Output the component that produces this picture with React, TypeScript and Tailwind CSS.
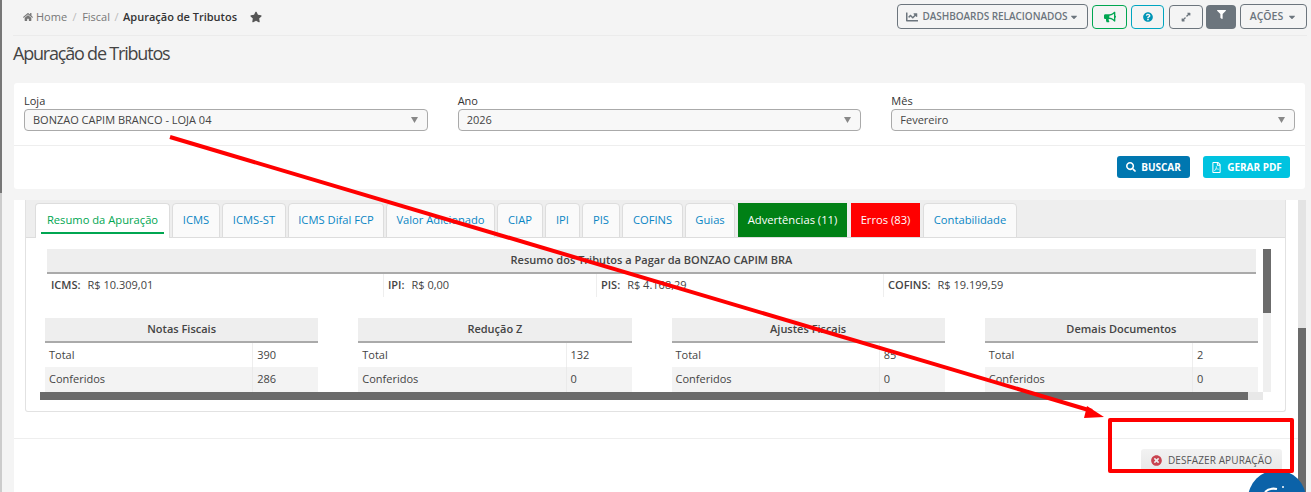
import {
  FaBullhorn,
  FaCaretDown,
  FaChartLine,
  FaExpandAlt,
  FaFilter,
  FaHome,
  FaQuestionCircle,
  FaRegFilePdf,
  FaSearch,
  FaStar,
  FaTimesCircle,
} from 'react-icons/fa'

const tabs = [
  { label: 'ICMS', w: 'w-[48px]' },
  { label: 'ICMS-ST', w: 'w-[64px]' },
  { label: 'ICMS Difal FCP', w: 'w-[96px]' },
  { label: 'Valor Adicionado', w: 'w-[109px]' },
  { label: 'CIAP', w: 'w-[46px]' },
  { label: 'IPI', w: 'w-[35px]' },
  { label: 'PIS', w: 'w-[38px]' },
  { label: 'COFINS', w: 'w-[61px]' },
  { label: 'Guias', w: 'w-[50px]' },
]

const totals = [
  { label: 'ICMS:', value: 'R$ 10.309,01', w: 'w-[337px]' },
  { label: 'IPI:', value: 'R$ 0,00', w: 'w-[213px]' },
  { label: 'PIS:', value: 'R$ 4.168,29', w: 'w-[287px]' },
  { label: 'COFINS:', value: 'R$ 19.199,59', w: 'flex-1' },
]

const docs = [
  { title: 'Notas Fiscais', total: '390', checked: '286' },
  { title: 'Redução Z', total: '132', checked: '0' },
  { title: 'Ajustes Fiscais', total: '85', checked: '0' },
  { title: 'Demais Documentos', total: '2', checked: '0' },
]

function SelectBox({ label, value }: { label: string; value: string }) {
  return (
    <div className="min-w-0">
      <div className="h-[16px] text-[11px] leading-[16px] text-[#333]">{label}</div>
      <div className="flex h-[22px] items-center justify-between rounded-[4px] border border-[#aaa] bg-[#f8f8f8] pl-[8px] pr-[8px] text-[11px] text-[#444]">
        <span>{value}</span>
        <svg width="7" height="6" viewBox="0 0 7 6" className="mr-px">
          <polygon points="0,0 7,0 3.5,6" fill="#888" />
        </svg>
      </div>
    </div>
  )
}

function DocTable({ title, total, checked }: { title: string; total: string; checked: string }) {
  return (
    <div className="text-[11px] text-[#444]">
      <div className="flex h-[25px] items-center justify-center border-b-2 border-[#aaa] bg-[#eee] font-semibold text-[#444]">
        {title}
      </div>
      <div className="flex h-[24px] items-center">
        <div className="flex h-full flex-1 items-center border-r border-[#eee] pl-[4px]">Total</div>
        <div className="w-[65px] pl-[4px]">{total}</div>
      </div>
      <div className="flex h-[25px] items-center bg-[#f3f3f3]">
        <div className="flex h-full flex-1 items-center border-r border-[#eaeaea] pl-[4px]">Conferidos</div>
        <div className="w-[65px] pl-[4px]">{checked}</div>
      </div>
    </div>
  )
}

export default function App() {
  return (
    <div className="relative flex h-[492px] w-[1311px] overflow-hidden bg-[#f4f4f4] font-['Open_Sans',sans-serif]">
      <div className="flex w-[2px] shrink-0 flex-col">
        <div className="h-[193px] bg-[#777]" />
        <div className="flex-1 bg-[#ccc]" />
      </div>

      <div className="ml-[12px] flex w-[1292px] shrink-0 flex-col">
        <div className="-mx-px flex h-[36px] shrink-0 items-start justify-between border-b border-[#ebebeb]">
          <div className="flex items-center pl-[10px] pt-[9px] text-[11px] leading-[16px] text-[#777]">
            <FaHome className="mr-[3px] h-[10px] w-[10px] text-[#777]" />
            <span>Home</span>
            <span className="mx-[5.5px] text-[#bbb]">/</span>
            <span>Fiscal</span>
            <span className="mx-[4.5px] text-[#bbb]">/</span>
            <span className="font-semibold text-[#333]">Apuração de Tributos</span>
            <FaStar className="ml-[13px] h-[12px] w-[12px] text-[#555]" />
          </div>
          <div className="flex items-start pt-[4px] text-[#6c757d]">
            <button className="flex h-[25px] w-[191px] items-center justify-center rounded-[4px] border border-[#6c757d] text-[10px] font-semibold tracking-[-0.05px]">
              <FaChartLine className="mr-[4px] h-[12px] w-[12px]" />
              DASHBOARDS RELACIONADOS
              <FaCaretDown className="ml-[1px] h-[10px] w-[10px]" />
            </button>
            <button className="ml-[4px] mt-px flex h-[24px] w-[35px] items-center justify-center rounded-[4px] border border-[#00a651] text-[#00a651]">
              <FaBullhorn className="h-[12px] w-[12px]" />
            </button>
            <button className="ml-[4px] mt-px flex h-[24px] w-[33px] items-center justify-center rounded-[4px] border border-[#00a5c0] text-[#0095b6]">
              <FaQuestionCircle className="h-[10px] w-[10px]" />
            </button>
            <button className="ml-[5px] mt-px flex h-[24px] w-[34px] items-center justify-center rounded-[4px] border border-[#6c757d]">
              <FaExpandAlt className="h-[10px] w-[10px]" />
            </button>
            <button className="ml-[3px] mt-px flex h-[24px] w-[30px] justify-center rounded-[4px] bg-[#6c757d] pt-[5px] text-white">
              <FaFilter className="h-[9px] w-[9px]" />
            </button>
            <button className="ml-[4px] flex h-[25px] w-[67px] items-center justify-center rounded-[4px] border border-[#6c757d] text-[10.5px] font-semibold">
              AÇÕES
              <FaCaretDown className="ml-[4px] h-[10px] w-[10px]" />
            </button>
          </div>
        </div>

        <div className="-ml-px flex h-[47px] shrink-0 items-start pt-[6px] text-[18px] leading-[22px] tracking-[-1.2px] text-[#444]">
          Apuração de Tributos
        </div>

        <div className="flex h-[106px] w-[1291px] shrink-0 flex-col rounded-[3px] bg-white">
          <div className="grid h-[63px] shrink-0 grid-cols-3 gap-x-[30px] border-b border-[#eee] px-[10px] pt-[10px]">
            <SelectBox label="Loja" value="BONZAO CAPIM BRANCO - LOJA 04" />
            <SelectBox label="Ano" value="2026" />
            <SelectBox label="Mês" value="Fevereiro" />
          </div>
          <div className="flex justify-end gap-[13px] pr-[15px] pt-[10px] text-[10px] font-bold text-white">
            <button className="flex h-[22px] w-[73px] items-center justify-center rounded-[3px] bg-[#0077b0]">
              <FaSearch className="mr-[5px] h-[10px] w-[10px]" />
              BUSCAR
            </button>
            <button className="flex h-[22px] w-[87px] items-center justify-center rounded-[3px] bg-[#00c3e0]">
              <FaRegFilePdf className="mr-[5px] h-[11px] w-[11px]" />
              GERAR PDF
            </button>
          </div>
        </div>

        <div className="mt-[11px] flex min-h-0 flex-1">
          <div className="min-w-0 flex-1 bg-white">
            <div className="ml-[11px] h-[212px] w-[1261px] rounded-b-[3px] border border-t-0 border-[#e2e2e2]">
              <div className="flex h-[38px] items-end border-b border-[#ddd] bg-[#eee] pl-[9px] text-[11.2px]">
                <div className="mb-[-1px] flex h-[35px] w-[135px] items-start justify-center rounded-t-[4px] border border-b-0 border-[#ddd] bg-white px-[5px] pt-[7px]">
                  <span className="block w-full border-b-2 border-[#00a651] pb-[3px] text-center leading-[18px] text-[#00a651]">
                    Resumo da Apuração
                  </span>
                </div>
                {tabs.map((t) => (
                  <div
                    key={t.label}
                    className={`mb-[-1px] ml-[2px] flex h-[35px] items-center justify-center rounded-t-[4px] border border-[#ddd] bg-[#fafafa] text-[#0a86c4] ${t.w}`}
                  >
                    {t.label}
                  </div>
                ))}
                <div className="ml-[3px] flex h-[34px] w-[109px] items-center justify-center bg-[#008015] text-white">
                  Advertências (11)
                </div>
                <div className="ml-[4px] flex h-[34px] w-[69px] items-center justify-center bg-[#ff0000] text-white">
                  Erros (83)
                </div>
                <div className="mb-[-1px] ml-[3px] flex h-[35px] w-[94px] items-center justify-center rounded-t-[4px] border border-[#ddd] bg-[#fafafa] text-[#0a86c4]">
                  Contabilidade
                </div>
              </div>

              <div className="ml-[14px] mt-[11px] flex w-[1231px]">
                <div className="h-[143px] w-[1223px] overflow-hidden">
                  <div className="h-[143px] px-[7px]">
                    <div className="flex h-[25px] items-center justify-center border-b-2 border-[#aaa] bg-[#eee] text-[11px] font-semibold text-[#444]">
                      Resumo dos Tributos a Pagar da BONZAO CAPIM BRA
                    </div>
                    <div className="flex h-[23px] text-[11px] text-[#444]">
                      {totals.map((t) => (
                        <div key={t.label} className={`flex h-full items-center gap-[7px] border-r border-[#eee] pl-[4px] last:border-r-0 ${t.w}`}>
                          <span className="font-semibold">{t.label}</span>
                          <span>{t.value}</span>
                        </div>
                      ))}
                    </div>
                    <div className="-mx-[2px] mt-[21px] grid grid-cols-4 gap-x-[40px]">
                      {docs.map((d) => (
                        <DocTable key={d.title} {...d} />
                      ))}
                    </div>
                  </div>
                </div>
                <div className="flex h-[143px] w-[8px] shrink-0 flex-col bg-[#efefef]">
                  <div className="h-[64px] bg-[#6b6b6b]" />
                </div>
              </div>
              <div className="ml-[14px] flex h-[8px] w-[1223px] bg-[#e8e8e8]">
                <div className="w-[1208px] bg-[#6b6b6b]" />
              </div>
            </div>

            <div className="mt-[26px] flex justify-end border-t border-[#eee] pr-[16px] pt-[10px]">
              <button className="flex h-[22px] w-[141px] items-center justify-center rounded-[3px] bg-gradient-to-b from-[#f2f2f2] to-[#e8e8e8] text-[10px] tracking-[0.1px] text-[#555]">
                <FaTimesCircle className="mr-[6px] h-[11px] w-[11px] text-[#c9434f]" />
                DESFAZER APURAÇÃO
              </button>
            </div>
          </div>
          <div className="flex w-[8px] shrink-0 flex-col">
            <div className="h-[128px] bg-[#e4e4e4]" />
            <div className="flex-1 bg-[#6b6b6b]" />
          </div>
        </div>
      </div>

      {/* annotation drawn over the screenshot */}
      <svg className="pointer-events-none absolute left-0 top-0" width="1311" height="492" viewBox="0 0 1311 492" fill="none">
        <path d="M170 137L1092 411" stroke="#ff0000" strokeWidth="4" />
        <polygon points="1104,417 1087,406 1084,418" fill="#ff0000" />
        <circle cx="1277" cy="499" r="29" fill="#0b62a8" />
        <path d="M1265 492c3-3 7-4 12-3" stroke="#fff" strokeWidth="2" />
        <circle cx="1283" cy="487" r="1" fill="#fff" />
      </svg>
      <div className="pointer-events-none absolute left-[1108px] top-[418px] h-[55px] w-[186px] rounded-[2px] border-[4px] border-[#ff0000]" />
    </div>
  )
}
